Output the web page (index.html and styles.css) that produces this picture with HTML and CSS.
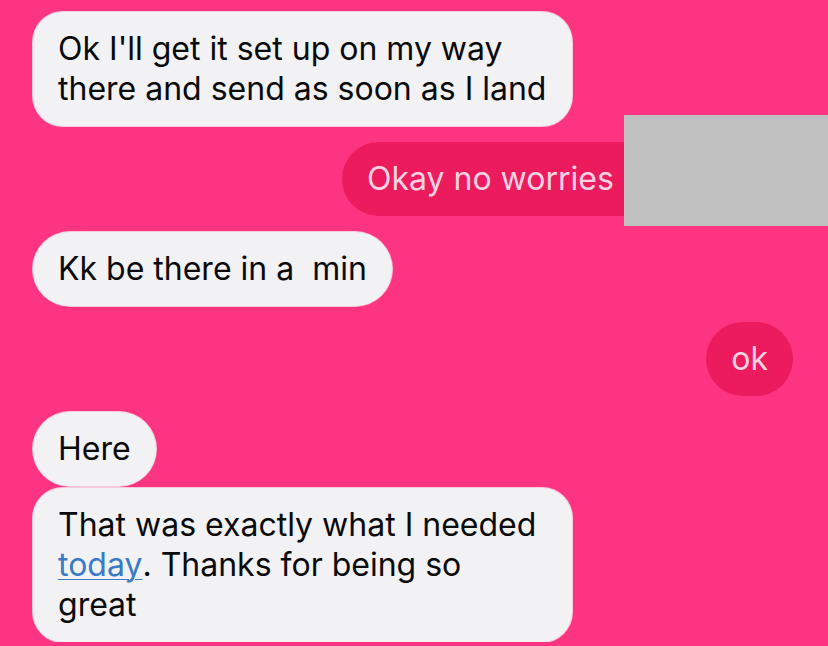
FILE: index.html
```html
<!DOCTYPE html>
<html lang="en">
<head>
    <meta charset="UTF-8">
    <meta name="viewport" content="width=device-width, initial-scale=1.0">
    <title>Messages</title>
    <link rel="stylesheet" href="styles.css">
</head>
<body>
    <div class="chat">
        <div class="msg in wide">Ok I'll get it set up on my way there and send as soon as I land</div>
        <div class="msg out redacted-row">
            Okay no worries man
            <div class="redact"></div>
        </div>
        <div class="msg in">Kk be there in a &nbsp;min</div>
        <div class="msg out">ok</div>
        <div class="msg in">Here</div>
        <div class="msg in wide tight">That was exactly what I needed <a href="#" class="link">today</a>. Thanks for being so great</div>
    </div>
</body>
</html>
```

FILE: styles.css
```css
body {
    margin: 0;
    background: #fd3481;
    font-family: Inter, "Liberation Sans", Arial, sans-serif;
    overflow: hidden;
}
.chat {
    display: flex;
    flex-direction: column;
    gap: 16px;
    padding: 12px 35px 0 33px;
}
.msg {
    font-size: 32px;
    line-height: 40px;
    padding: 17px 25px;
    border-radius: 37px;
    max-width: 489px;
}
.msg.in {
    align-self: flex-start;
    background: #f2f1f3;
    color: #0a0a0a;
    box-shadow: 0 0 0 1px #f7c9da;
}
.msg.wide {
    border-radius: 30px;
}
.msg.out {
    align-self: flex-end;
    background: #ec1b5d;
    color: #fbd2e2;
}
.msg.tight {
    margin-top: -14px;
}
.redacted-row {
    position: relative;
    width: 401px;
    white-space: nowrap;
}
.redact {
    position: absolute;
    top: -27px;
    left: 282px;
    width: 240px;
    height: 111px;
    background: #c0c0c0;
}
.link {
    display: inline-block;
    line-height: 40px;
    color: #3b7ac6;
    text-decoration: underline;
    text-decoration-thickness: 1px;
    text-underline-offset: 3px;
}
```
